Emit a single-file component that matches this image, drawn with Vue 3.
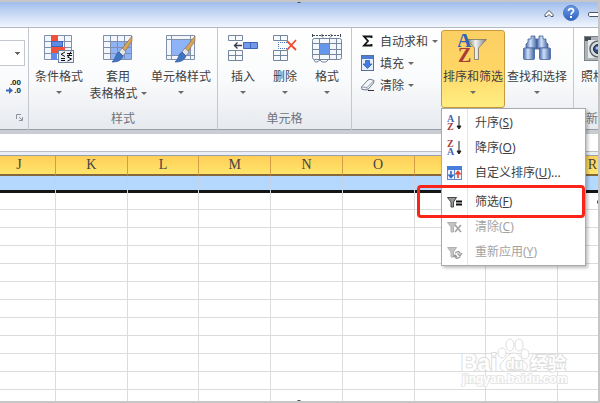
<template>
  <div class="window">
    <header class="titlebar">
      <button class="plain" aria-label="Minimize ribbon">
        <svg width="10" height="10" viewBox="0 0 10 10">
          <path d="M1 6.500L5 2.500L9 6.500V8.500H7L5 6.500L3 8.500H1Z" fill="#fff" stroke="#4c5563" />
        </svg>
      </button>
      <button class="plain" aria-label="Help">
        <svg width="16" height="16" viewBox="0 0 16 16">
          <defs>
            <linearGradient id="help" x1="0" y1="0" x2="0" y2="1">
              <stop offset="0" stop-color="#6a9be4" />
              <stop offset="1" stop-color="#2f63c0" />
            </linearGradient>
          </defs>
          <circle cx="8" cy="8" r="7.500" fill="url(#help)" stroke="#4a76c4" />
          <path d="M5.500 6C5.500 2.700 10.700 2.800 10.500 6C10.400 7.600 8 7.600 8 9.800" fill="none" stroke="#fff" stroke-width="1.700" />
          <rect x="7" y="11" width="2" height="2" fill="#fff" />
        </svg>
      </button>
      <button class="plain" aria-label="Minimize window">
        <svg width="10" height="10" viewBox="0 0 10 10">
          <path d="M12 4.500H1.500Q.5 4.500 .5 6Q.5 8.500 1.500 8.500H12" fill="#fff" stroke="#4c5563" />
        </svg>
      </button>
    </header>

    <div class="ribbon">
      <section class="group number">
        <div class="tools number-tools">
          <select class="format" aria-label="数字格式"><option></option></select>
          <button class="plain decimals" aria-label="减少小数位数">
            <span>.00</span>
            <span>
              <svg width="7" height="7" viewBox="0 0 7 7"><path d="M0 2.500H3V0L7 3.500L3 7V4.500H0Z" fill="#3c68c4" /></svg>.0
            </span>
          </button>
        </div>
        <div class="group-name launcher">
          <svg width="7" height="7" viewBox="0 0 7 7">
            <path d="M.5 5V.5H5M3 3L6 6M6.500 3V6.500H3" fill="none" stroke="#8b929c" />
          </svg>
        </div>
      </section>

      <section class="group styles">
        <div class="tools">
          <button class="big w60">
            <svg class="icon" viewBox="0 0 30 30">
              <rect x=".5" y="1.500" width="27" height="24" fill="#f3f7fd" />
              <path d="M.5 1.500H27.500V25.500H.5ZM.5 7.500H27M.5 13.500H27M.5 19.500H27M7.500 1V25M13.500 1V7M20.500 1V25" fill="none" stroke="#8090ac" />
              <rect x="7" y="1" width="7" height="6" fill="#f0503c" />
              <rect x="7.500" y="7.500" width="11" height="5" fill="#5f8be8" stroke="#3f66b8" />
              <rect x="7" y="13" width="14" height="6" fill="#f0503c" />
              <rect x="7" y="19" width="6" height="7" fill="#5f8be8" />
              <rect x="14.500" y="16.500" width="15" height="12" fill="#eef2f8" stroke="#71829c" />
              <path d="M21 18L17 20.300L21 22.500M17 24.500H21M17 26.500H21M23 19.500H28M23 21.500H28M27 17.500L24 23M23.500 23L27.500 25L23.500 27" fill="none" stroke="#111" />
            </svg>
            <span>条件格式</span>
            <i class="arrow"></i>
          </button>
          <button class="big w58">
            <svg class="icon" viewBox="0 0 30 30">
              <rect x=".5" y="1.500" width="28" height="24" fill="#f3f7fd" />
              <rect x="7" y="7" width="21" height="18" fill="#8eb3f6" />
              <path d="M.5 1.500H28.500V25.500H.5ZM.5 7.500H28M.5 13.500H28M.5 19.500H28M7.500 1V25M14.500 1V25M21.500 1V25" fill="none" stroke="#8090ac" />
              <path d="M29 2L18 16L21 19L29 7Z" fill="#d9a55d" stroke="#86643c" stroke-width=".6" />
              <path d="M19 14L23 18L20 22L16 18Z" fill="#e3e5e8" stroke="#777" stroke-width=".7" />
              <path d="M16 18L20 22C18 27 14 28 9 28C13 25 12 20 16 18Z" fill="#4274c4" stroke="#2e579f" stroke-width=".7" />
            </svg>
            <span>套用</span>
            <span class="with-arrow">表格格式<i class="arrow"></i></span>
          </button>
          <button class="big w68">
            <svg class="icon" viewBox="0 0 30 30">
              <rect x=".5" y="1.500" width="28" height="24" fill="#f3f7fd" />
              <path d="M.5 1.500H28.500V25.500H.5ZM.5 5.500H28M.5 21.500H28M5.500 1V25M24.500 1V25" fill="none" stroke="#8191a8" />
              <rect x="6" y="6" width="18" height="15" fill="#8eb3f6" />
              <path d="M29 2L18 16L21 19L29 7Z" fill="#d9a55d" stroke="#86643c" stroke-width=".6" />
              <path d="M19 14L23 18L20 22L16 18Z" fill="#e3e5e8" stroke="#777" stroke-width=".7" />
              <path d="M16 18L20 22C18 27 14 28 9 28C13 25 12 20 16 18Z" fill="#4274c4" stroke="#2e579f" stroke-width=".7" />
            </svg>
            <span>单元格样式</span>
            <i class="arrow"></i>
          </button>
        </div>
        <div class="group-name">样式</div>
      </section>

      <section class="group cells">
        <div class="tools">
          <button class="big w42">
            <svg class="icon" viewBox="0 0 30 30">
              <path d="M.5 1.500H14.500V6.500H.5ZM7.500 1.500V6.500M.5 16.500H14.500V26.500H.5ZM7.500 16.500V26.500M.5 21.500H14.500" fill="#f8fafd" stroke="#75869f" />
              <path d="M15.500 8.500H29.500V14.500H15.500ZM22.500 8.500V14.500" fill="#6f9bea" stroke="#3d67b5" />
              <path d="M6 11.500H14M9.500 8.500L6.500 11.500L9.500 14.500" fill="none" stroke="#333f50" stroke-width="1.300" />
            </svg>
            <span>插入</span>
            <i class="arrow"></i>
          </button>
          <button class="big w42">
            <svg class="icon" viewBox="0 0 30 30">
              <path d="M3.500 1.500H17.500V6.500H3.500ZM10.500 1.500V6.500M3.500 16.500H17.500V26.500H3.500ZM10.500 16.500V26.500M3.500 21.500H17.500" fill="#f8fafd" stroke="#75869f" />
              <path d="M17 8.500H8.500V14.500H17" fill="none" stroke="#4674c4" stroke-dasharray="1 1" />
              <path d="M17 7L26 16M26 6L17 16" fill="none" stroke="#f04a31" stroke-width="1.800" />
            </svg>
            <span>删除</span>
            <i class="arrow"></i>
          </button>
          <button class="big w42">
            <svg class="icon" viewBox="0 0 30 30">
              <path d="M1 1.500H28" stroke="#3e4a5c" stroke-dasharray="2 1" />
              <path d="M.5 0V3M28.500 0V3M11 -.5L9 1.500L11 3.500M18 -.5L20 1.500L18 3.500" fill="none" stroke="#3e4a5c" />
              <rect x=".5" y="4.500" width="29" height="21" rx="2" fill="#f3f7fd" stroke="#75869f" />
              <path d="M1 9.500H29M1 20.500H29M7.500 5V25M17.500 5V25M24.500 5V25M1 15.500H7M18 15.500H29M2 26Q3 29 5 28L8 26L10 28Q15 29 16 26" fill="none" stroke="#75869f" />
              <rect x="8" y="10" width="9" height="10" fill="#6695ec" />
            </svg>
            <span>格式</span>
            <i class="arrow"></i>
          </button>
        </div>
        <div class="group-name">单元格</div>
      </section>

      <section class="group editing">
        <div class="tools">
          <div class="small-tools">
            <button class="small">
              <svg width="16" height="16" viewBox="0 0 16 16">
                <path d="M11.500 5V3.500H4L8 8L4 12.500H11.500V11" fill="none" stroke="#111" stroke-width="1.800" />
              </svg>
              自动求和<i class="arrow"></i>
            </button>
            <button class="small">
              <svg width="16" height="16" viewBox="0 0 16 16">
                <rect x="1.500" y=".5" width="12" height="15" fill="#e5eefb" stroke="#54719d" />
                <rect x="2" y="1" width="11" height="3" fill="#4d7dd5" />
                <path d="M5.500 5.500H9.500V9H12L7.500 13.500L3 9H5.500Z" fill="#437be0" stroke="#2756ae" stroke-width=".7" />
              </svg>
              填充<i class="arrow"></i>
            </button>
            <button class="small">
              <svg width="16" height="16" viewBox="0 0 16 16">
                <path d="M1.500 10L8 3Q9 2 11 2.500L14 3.500L13.500 6L7.500 13L2 12.500Z" fill="#f4f6fa" stroke="#6f7c90" />
                <path d="M2 10L7 10.500L13.500 4M7 10.500V13" fill="none" stroke="#8e99aa" />
                <path d="M8 13.500H14" stroke="#333" />
              </svg>
              清除<i class="arrow"></i>
            </button>
          </div>

          <div class="sort">
            <button class="big w64 active" aria-haspopup="true" aria-expanded="true">
              <svg class="icon" viewBox="0 0 30 30">
                <defs>
                  <linearGradient id="steel">
                    <stop offset="0" stop-color="#777b82" />
                    <stop offset=".45" stop-color="#f2f2f2" />
                    <stop offset="1" stop-color="#777b82" />
                  </linearGradient>
                </defs>
                <path d="M9 5.500H28.500L20.500 14V25.500H16.500V14Z" fill="url(#steel)" stroke="#7c7564" stroke-width=".8" />
                <text class="az-big" x="-1" y="13" fill="#3562b5">A</text>
                <text class="az-big" x="0" y="28" fill="#a93a35">Z</text>
              </svg>
              <span>排序和筛选</span>
              <i class="arrow"></i>
            </button>

            <ul class="menu">
              <li v-for="item in items" :key="item.key" :class="{ marked: item.key === 'F' }">
                <button :disabled="item.disabled">
                  <svg width="16" height="16" viewBox="0 0 16 16">
                    <template v-if="item.icon === 'asc'">
                      <text class="az" x="0" y="7" fill="#3f66b0">A</text>
                      <text class="az" x="0" y="15" fill="#a93a3a">Z</text>
                    </template>
                    <template v-else-if="item.icon === 'desc'">
                      <text class="az" x="0" y="7" fill="#a93a3a">Z</text>
                      <text class="az" x="0" y="15" fill="#3f66b0">A</text>
                    </template>
                    <template v-else-if="item.icon === 'custom'">
                      <rect x=".5" y="1.500" width="14" height="13" fill="#edf3fc" stroke="#6488c2" />
                      <rect x="0" y="1" width="15" height="4" fill="#477ddd" />
                      <path d="M7.500 5V14" stroke="#6488c2" />
                      <path d="M4 6V12M1.500 9.500L4 12.500L6.500 9.500" fill="none" stroke="#3467c2" stroke-width="1.600" />
                      <path d="M11 13V7M8.500 9.500L11 6.500L13.500 9.500" fill="none" stroke="#e04634" stroke-width="1.600" />
                    </template>
                    <template v-else>
                      <path d="M.5 3.500H9.500L6.500 8V13H4V8Z" :fill="item.disabled ? '#c4c4c4' : '#999'" :stroke="item.disabled ? '#b0b0b0' : '#444'" />
                      <path v-if="item.icon === 'filter'" d="M9 7.500H15M9 10.500H15" stroke="#111" stroke-width="2" />
                      <path v-else-if="item.icon === 'clear'" d="M8 6L14 13M14 6L8 13" stroke="#a5a5a5" stroke-width="1.800" />
                      <path v-else d="M8 9Q13 6 13 10M15 9L13 12L10.500 9.500M13 13Q9 16 8 12M6.500 13L8 11L10 13" fill="none" stroke="#999" stroke-width="1.300" />
                    </template>
                    <path v-if="item.icon === 'asc' || item.icon === 'desc'" d="M12 1V11M10 11H14L12 14Z" fill="#222" stroke="#222" />
                  </svg>
                  <span>{{ item.label }}(<u>{{ item.key }}</u>){{ item.more }}</span>
                </button>
              </li>
            </ul>
          </div>

          <button class="big w64">
            <svg class="icon" viewBox="0 0 30 30">
              <defs>
                <linearGradient id="lens">
                  <stop offset="0" stop-color="#4a6cab" />
                  <stop offset=".4" stop-color="#cfe0fa" />
                  <stop offset="1" stop-color="#3f629f" />
                </linearGradient>
              </defs>
              <g stroke="#46639a" stroke-width=".8">
                <rect x="12" y="9" width="6" height="6" fill="#6685bb" />
                <path d="M9 2H13V5H15V14H4V10L6 8V5H9Z" fill="url(#lens)" />
                <path d="M17 2H21V5H24V8L26 10V14H15V5H17Z" fill="url(#lens)" />
                <rect x="1.500" y="14" width="11" height="11.500" rx="1" fill="url(#lens)" />
                <rect x="17.500" y="14" width="11" height="11.500" rx="1" fill="url(#lens)" />
              </g>
            </svg>
            <span>查找和选择</span>
            <i class="arrow"></i>
          </button>
        </div>
        <div class="group-name"></div>
      </section>

      <section class="group custom">
        <div class="tools">
          <button class="big camera">
            <svg class="icon" viewBox="0 0 30 30">
              <rect x=".5" y="2.500" width="28" height="24" fill="#aeb3b7" stroke="#7d8488" />
              <rect x="1" y="3" width="6" height="4" fill="#444d53" />
              <rect x="4" y="6" width="23" height="18" fill="#e7eaeb" />
              <circle cx="14" cy="15" r="8" fill="#d8dcdf" stroke="#59636b" stroke-width="1.500" />
              <circle cx="14" cy="15" r="4.500" fill="#2d4e86" stroke="#222b38" />
              <circle cx="13" cy="14" r="1.500" fill="#a8c7f3" />
            </svg>
            <span>照相机</span>
          </button>
        </div>
        <div class="group-name">新建组</div>
      </section>
    </div>

    <div class="formula-bar"></div>

    <div class="sheet">
      <table>
        <colgroup>
          <col class="first" />
          <col v-for="n in 7" :key="n" />
          <col class="last" />
        </colgroup>
        <thead>
          <tr>
            <th v-for="c in columns" :key="c" scope="col">{{ c }}</th>
          </tr>
        </thead>
        <tbody>
          <tr v-for="r in 40" :key="r">
            <td v-for="c in columns" :key="c"></td>
          </tr>
        </tbody>
      </table>
    </div>

    <i class="handle top"></i>
    <i class="handle right"></i>
    <i class="handle bottom"></i>

    <svg class="watermark" width="112" height="56" viewBox="0 0 112 56">
      <g fill="#fff" stroke="#dedede">
        <ellipse cx="46" cy="20" rx="4" ry="5" />
        <ellipse cx="54" cy="12" rx="4" ry="6" />
        <ellipse cx="63" cy="12" rx="4" ry="6" />
        <ellipse cx="69" cy="21" rx="4" ry="5" />
        <path d="M58 20C64 20 64 26 69 29C74 34 70 39 64 38Q58 37 52 38C45 40 41 34 47 28C51 25 52 20 58 20Z" />
      </g>
      <text class="logo" x="5" y="38">Bai</text>
      <text class="cn" x="74" y="37">经验</text>
      <text class="du" x="50" y="36">du</text>
      <text class="url" x="6" y="50">jingyan.baidu.com</text>
    </svg>
  </div>
</template>

<script setup>
const columns = ["J", "K", "L", "M", "N", "O", "P", "Q", "R"];

const items = [
  { label: "升序", key: "S", icon: "asc" },
  { label: "降序", key: "O", icon: "desc" },
  { label: "自定义排序", key: "U", icon: "custom", more: "..." },
  { label: "筛选", key: "F", icon: "filter" },
  { label: "清除", key: "C", icon: "clear", disabled: true },
  { label: "重新应用", key: "Y", icon: "reapply", disabled: true },
];
</script>

<style>
body {
  margin: 0;
}
</style>

<style scoped>
* {
  box-sizing: border-box;
}

.window {
  position: relative;
  display: flex;
  flex-direction: column;
  height: 100vh;
  overflow: hidden;
  border: solid #c6c6c6;
  border-width: 2px 2px 2px 0;
  background: #fff;
  color: #3f3f3f;
  font: 12px/17px "Noto Sans", "Noto Sans CJK SC", sans-serif;
}

button {
  padding: 0;
  border: 0;
  background: none;
  color: inherit;
  font: inherit;
  white-space: nowrap;
}

svg {
  display: block;
  flex: none;
}

.titlebar {
  display: flex;
  flex: none;
  align-items: center;
  justify-content: flex-end;
  gap: 9px;
  height: 26px;
  padding-bottom: 3px;
  border-bottom: 1px solid #b2b9c4;
  background: linear-gradient(#a2bdec, #c9daf5 50%, #f0f5fd);
}

.ribbon {
  display: flex;
  flex: none;
  height: 106px;
  border-bottom: 4px solid #c9ccd3;
  background: linear-gradient(#fff, #fafbfc 50%, #e6e9ee);
  box-shadow: inset 0 -1px #969ba5;
}

.group {
  display: flex;
  flex: none;
  flex-direction: column;
  border-right: 1px solid #c3c8d0;
}

.tools {
  display: flex;
  height: 80px;
  padding-top: 2px;
}

.group-name {
  padding-top: 2px;
  color: #6c7480;
  text-align: center;
}

.number {
  width: 29px;
}

.number-tools {
  flex-direction: column;
  align-items: flex-start;
  gap: 13px;
  padding-top: 12px;
}

.format {
  flex: none;
  width: 25px;
  height: 26px;
  border: 1px solid #c3c8d0;
  border-left: 0;
  appearance: none;
  background: linear-gradient(#666, #666) 15px 11px / 5px 1px no-repeat,
    linear-gradient(#666, #666) 16px 12px / 3px 1px no-repeat,
    linear-gradient(#666, #666) 17px 13px / 1px 1px no-repeat, #fff;
}

.decimals {
  display: flex;
  flex-direction: column;
  align-items: flex-end;
  width: 21px;
  color: #222;
  font: bold 8px/8px "Liberation Sans", sans-serif;
}

.decimals span {
  display: flex;
  gap: 1px;
}

.launcher {
  padding: 6px 0 0 16px;
}

.cells .tools {
  padding-left: 4px;
  padding-right: 3px;
}

.styles .tools {
  padding-right: 2px;
}

.editing .tools {
  padding-right: 4px;
}

.big {
  display: flex;
  flex-direction: column;
  align-items: center;
  height: 78px;
  padding-top: 4px;
}

.icon {
  width: 30px;
  height: 30px;
  margin-bottom: 4px;
}

.w42 {
  width: 42px;
}

.w58 {
  width: 58px;
}

.w60 {
  width: 60px;
}

.w64 {
  width: 64px;
}

.w68 {
  width: 68px;
}

.arrow {
  border: 3px solid transparent;
  border-top-color: #6a6a6a;
  border-bottom: 0;
}

.big > .arrow {
  margin-top: 6px;
}

.with-arrow {
  display: flex;
  align-items: center;
  gap: 3px;
}

.small-tools {
  width: 89px;
  padding-left: 8px;
}

.small {
  display: flex;
  align-items: center;
  gap: 4px;
  height: 22px;
}

.sort {
  position: relative;
}

.active {
  border: 1px solid #c89a3c;
  border-radius: 3px;
  padding-top: 3px;
  background: linear-gradient(#fbcf63, #ffd666 50%, #ffee83);
}

.az,
.az-big {
  font-family: "Liberation Serif", serif;
  font-weight: bold;
}

.az {
  font-size: 10px;
}

.az-big {
  font-size: 20px;
}

.menu {
  position: absolute;
  z-index: 2;
  top: 78px;
  left: 0;
  width: 145px;
  margin: 0;
  padding: 1px 0;
  border: 1px solid #a7abb0;
  background: linear-gradient(90deg, #fff 25px, #e4e6e9 25px, #e4e6e9 26px, #fff 26px);
  box-shadow: 2px 2px 3px rgba(0, 0, 0, 0.25);
  list-style: none;
}

.menu button {
  display: flex;
  align-items: center;
  gap: 12px;
  width: 100%;
  height: 25px;
  padding-left: 5px;
}

.menu button:disabled {
  color: #a3a3a3;
}

.marked {
  position: relative;
  margin-top: 4px;
}

.marked::after {
  position: absolute;
  top: -4px;
  right: 0;
  bottom: -4px;
  left: -25px;
  border: 3px solid #fb2418;
  border-radius: 4px;
  content: "";
  pointer-events: none;
}

.custom {
  flex: 1 1 0;
  min-width: 0;
  overflow: hidden;
  border-right: 0;
}

.camera {
  width: 50px;
  flex: none;
}

.custom .group-name {
  padding-left: 12px;
  text-align: left;
  white-space: nowrap;
}

.formula-bar {
  flex: none;
  height: 22px;
  border-bottom: 1px solid #9ba0ab;
  background: linear-gradient(#fff 17px, #b9bdc6 17px, #b9bdc6 18px, #e9eef8 18px);
}

.sheet {
  flex: 1;
  min-height: 0;
  overflow: hidden;
}

table {
  width: 100%;
  border-spacing: 0;
  table-layout: fixed;
}

.first {
  width: 56px;
}

.last {
  width: 40px;
}

th {
  height: 20px;
  padding: 0;
  border-right: 1px solid #d69b45;
  border-bottom: 2px solid #86683a;
  background: linear-gradient(#ffcf58, #ffe56b);
  color: #444;
  font: 14px/16px "Liberation Serif", serif;
  text-align: center;
}

th:first-child {
  padding-right: 17px;
}

th:last-child {
  padding-left: 29px;
}

td {
  height: 18px;
  padding: 0;
  border: solid #dcdcdc;
  border-width: 0 1px 1px 0;
}

tr :last-child {
  border-right: 0;
}

/* the selected row sits above the freeze line */
tbody tr:first-child td {
  height: 17px;
  border-right-color: #c3d3e4;
  border-bottom: 0;
  background: linear-gradient(#b5d8ff 14px, #151515 14px) border-box;
}

tbody tr:nth-child(2) td {
  height: 17px;
}

.handle {
  position: absolute;
  z-index: 3;
  width: 6px;
  height: 6px;
  border: 1px solid #333;
  border-radius: 50%;
  background: #fff;
}

.top {
  top: -5px;
  left: calc(50% - 3px);
}

.right {
  top: calc(50% - 3px);
  right: -5px;
}

.bottom {
  bottom: -5px;
  left: calc(50% - 3px);
}

.watermark {
  position: absolute;
  right: 30px;
  bottom: 12px;
}

.watermark text {
  fill: #fff;
  stroke: #dedede;
  stroke-width: 2px;
  paint-order: stroke;
  font-family: "Liberation Sans", "Noto Sans CJK SC", sans-serif;
  font-weight: bold;
}

.watermark .logo {
  font-size: 23px;
}

.watermark .cn {
  font-size: 18px;
}

.watermark .du {
  font-size: 14px;
}

.watermark .url {
  stroke: #e6e6e6;
  font-size: 12px;
}
</style>
